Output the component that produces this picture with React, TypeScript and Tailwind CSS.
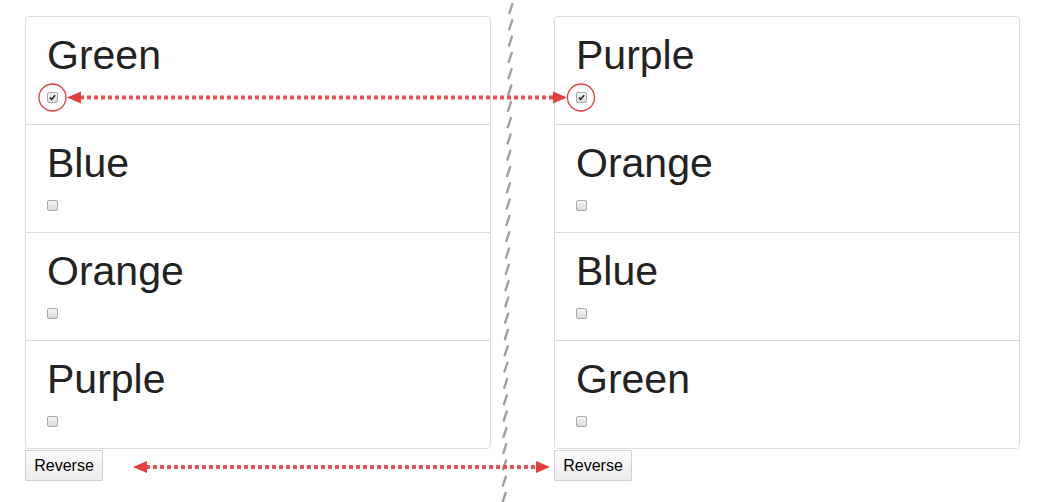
import React from "react";

const Box = ({ checked }: { checked?: boolean }) => (
  <span className="block w-[11px] h-[11px] rounded-[2px] border border-[#a9a9a9] bg-gradient-to-b from-[#f4f4f4] to-[#dcdcdc] relative">
    {checked && (
      <svg viewBox="0 0 11 11" className="absolute inset-0 w-full h-full">
        <path d="M2.3 5.6 L4.4 7.8 L8.7 2.8" stroke="#222" strokeWidth="1.8" fill="none" />
      </svg>
    )}
  </span>
);

const Column = ({ items }: { items: string[] }) => (
  <div className="flex flex-col w-[466px]">
    <div className="border border-[#dcdcdc] rounded-[4px] flex flex-col">
      {items.map((c, i) => (
        <div
          key={c}
          className={
            "h-[107px] pl-[21px] pt-[16px] flex flex-col " +
            (i > 0 ? "border-t border-[#dcdcdc] h-[108px]" : "")
          }
        >
          <div className="text-[41px] leading-[44px] text-[#222]" style={{ fontFamily: '"Liberation Sans", Arial, sans-serif' }}>
            {c}
          </div>
          <div className="mt-[15px]">
            <Box checked={i === 0} />
          </div>
        </div>
      ))}
    </div>
    <button
      className="mt-[1px] w-[78px] h-[31px] border border-[#d0d0d0] bg-gradient-to-b from-[#fbfbfb] to-[#ececec] text-[16px] text-black rounded-[1px]"
      style={{ fontFamily: '"Liberation Sans", Arial, sans-serif' }}
    >
      Reverse
    </button>
  </div>
);

export default function App() {
  const dashes = [];
  for (let i = 0; i < 31; i++) {
    const y = 4 + i * 16.3;
    const x = 512 - (y / 500) * 7;
    dashes.push(
      <line key={i} x1={x - 2.5} y1={y + 9} x2={x + 0.5} y2={y} stroke="#a0a0a0" strokeWidth="2.4" strokeLinecap="round" />
    );
  }
  const red = "#e2403f";
  return (
    <div className="relative w-[1045px] h-[502px] bg-white overflow-hidden">
      <div className="flex pt-[16px] pl-[25px] gap-[63px]">
        <Column items={["Green", "Blue", "Orange", "Purple"]} />
        <Column items={["Purple", "Orange", "Blue", "Green"]} />
      </div>
      <svg className="absolute inset-0 pointer-events-none" width="1045" height="502">
        {dashes}
        <circle cx="52.5" cy="97.5" r="13.5" fill="none" stroke={red} strokeWidth="1.3" />
        <circle cx="581" cy="97.5" r="13.5" fill="none" stroke={red} strokeWidth="1.3" />
        <line x1="80" y1="97.5" x2="553" y2="97.5" stroke={red} strokeWidth="4" strokeDasharray="4 3" opacity="0.9" />
        <polygon points="67,97.5 81,91.5 81,103.5" fill={red} />
        <polygon points="567,97.5 553,91.5 553,103.5" fill={red} />
        <line x1="146" y1="467" x2="536" y2="467" stroke={red} strokeWidth="4" strokeDasharray="4 3" opacity="0.9" />
        <polygon points="133,467 147,461 147,473" fill={red} />
        <polygon points="550,467 536,461 536,473" fill={red} />
      </svg>
    </div>
  );
}
